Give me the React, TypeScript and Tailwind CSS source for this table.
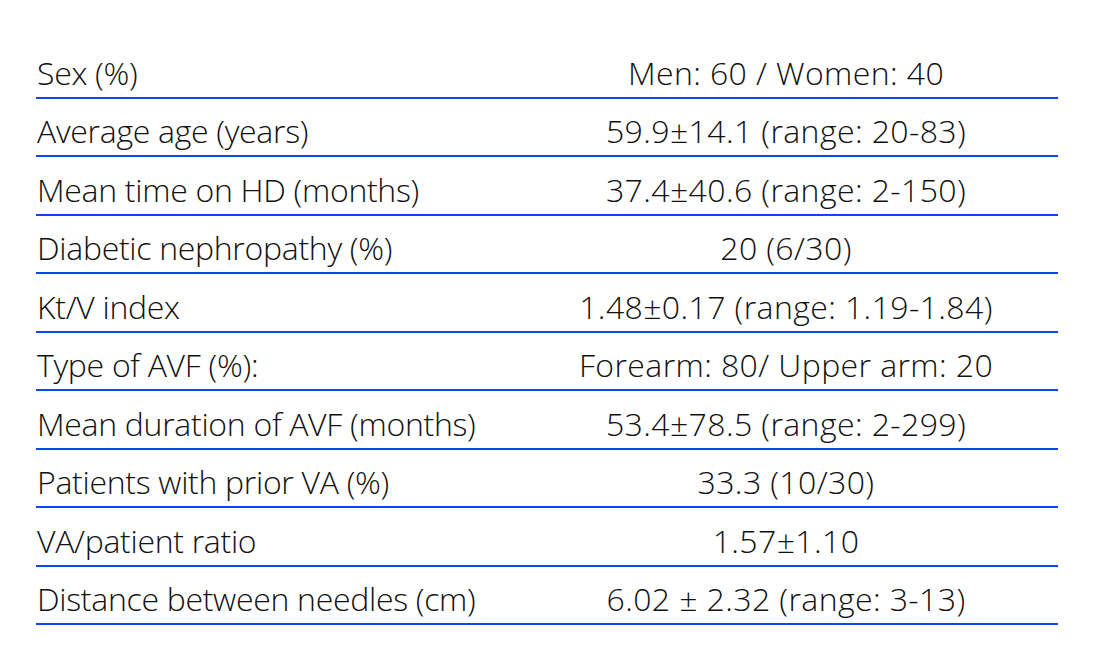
const rows: [string, string][] = [
  ["Sex (%)", "Men: 60 / Women: 40"],
  ["Average age (years)", "59.9±14.1 (range: 20-83)"],
  ["Mean time on HD (months)", "37.4±40.6 (range: 2-150)"],
  ["Diabetic nephropathy (%)", "20 (6/30)"],
  ["Kt/V index", "1.48±0.17 (range: 1.19-1.84)"],
  ["Type of AVF (%):", "Forearm: 80/ Upper arm: 20"],
  ["Mean duration of AVF (months)", "53.4±78.5 (range: 2-299)"],
  ["Patients with prior VA (%)", "33.3 (10/30)"],
  ["VA/patient ratio", "1.57±1.10"],
  ["Distance between needles (cm)", "6.02 ± 2.32 (range: 3-13)"],
];

export default function App() {
  return (
    <div className="w-[1095px] h-[656px] bg-white pt-[40px] pl-[36px] font-['Open_Sans',sans-serif] text-[#111]">
      <div className="w-[1022px] flex flex-col">
        {rows.map(([label, value]) => (
          <div
            key={label}
            className="h-[58.5px] flex items-end pb-[4px] border-b-2 border-[#0d47f2] text-[32px] font-light leading-[40px]"
          >
            <div className="w-[478px] pl-[1px] tracking-[-0.3px]">{label}</div>
            <div className="flex-1 text-center tracking-[0.4px]">{value}</div>
          </div>
        ))}
      </div>
    </div>
  );
}
